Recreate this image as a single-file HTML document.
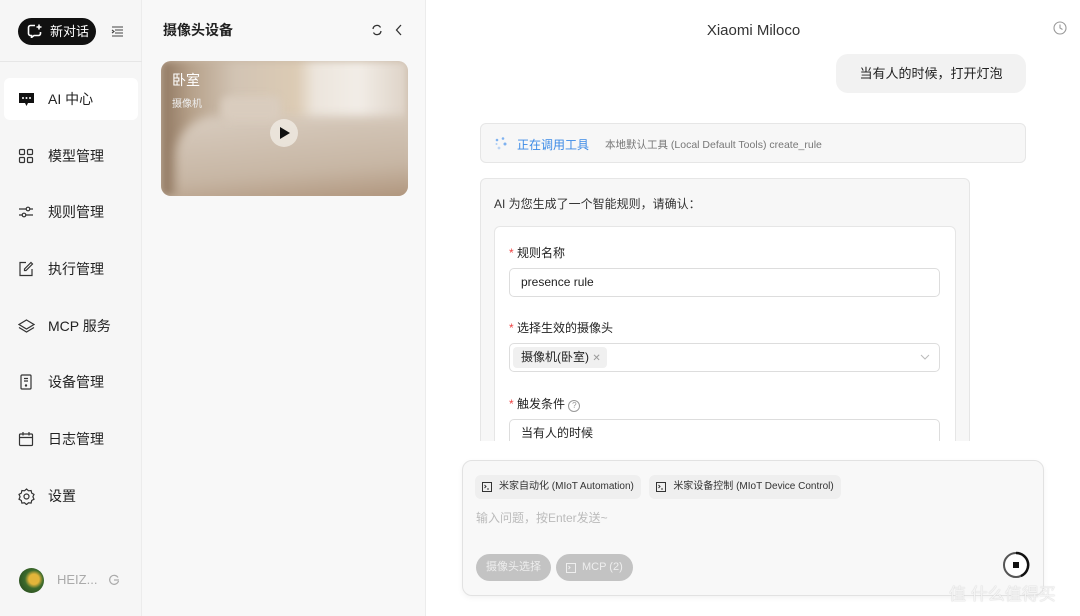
<!DOCTYPE html>
<html><head><meta charset="utf-8"><style>
*{box-sizing:border-box;margin:0;padding:0}
body{width:1080px;height:616px;overflow:hidden;background:#fff;font-family:"Liberation Sans","Noto Sans CJK SC",sans-serif;color:#222;position:relative}
.side{position:absolute;left:0;top:0;width:142px;height:616px;background:#f6f6f6;border-right:1px solid #ececec}
.newbtn{position:absolute;left:18px;top:18px;width:78px;height:27px;background:#111;border-radius:14px;color:#fff;font-size:13px;line-height:27px;padding-left:32px}
.newbtn svg{position:absolute;left:9px;top:6px}
.sep{position:absolute;left:0;top:61px;width:142px;border-top:1px solid #e6e6e6}
.nav{position:absolute;left:4px;width:134px;height:42px;border-radius:6px;font-size:14px;line-height:42px;padding-left:44px;color:#222}
.nav svg{position:absolute;left:14px;top:13px}
.nav.act{background:#fff}
.cam{position:absolute;left:142px;top:0;width:284px;height:616px;background:#f8f8f8;border-right:1px solid #ececec}
.main{position:absolute;left:427px;top:0;width:653px;height:616px;background:#fff}
.chip{display:inline-block;height:24px;line-height:24px;border-radius:6px;background:#efefef;font-size:10px;padding:0 7px 0 24px;position:relative;color:#333}
.chip svg{position:absolute;left:7px;top:7px}
</style></head><body>
<div class="side">
 <div class="newbtn"><svg width="16" height="14" viewBox="0 0 16 14"><path d="M8 1.5H3.5a2 2 0 0 0-2 2v6a2 2 0 0 0 2 2h1v2l2.5-2h4.5a2 2 0 0 0 2-2V8" fill="none" stroke="#fff" stroke-width="1.6"/><path d="M12 0.5v5M9.5 3h5" stroke="#fff" stroke-width="1.6"/></svg>新对话</div>
 <svg style="position:absolute;left:111px;top:26px" width="13" height="11" viewBox="0 0 13 11"><path d="M1 1h11M4 4h8M4 7h8M1 10h11M1 4l2 1.5L1 7" fill="none" stroke="#444" stroke-width="1.1"/></svg>
 <div class="sep"></div>
 <div class="nav act" style="top:78px"><svg width="17" height="17" viewBox="0 0 17 17"><path d="M1 2h15v10H10l-1.5 3L7 12H1z" fill="#111"/><circle cx="5" cy="7" r="1" fill="#fff"/><circle cx="8.5" cy="7" r="1" fill="#fff"/><circle cx="12" cy="7" r="1" fill="#fff"/></svg>AI 中心</div>
 <div class="nav" style="top:135px"><svg width="16" height="16" viewBox="0 0 16 16" fill="none" stroke="#333" stroke-width="1.2"><rect x="1.5" y="1.5" width="5" height="5" rx="1"/><rect x="9.5" y="1.5" width="5" height="5" rx="1"/><rect x="1.5" y="9.5" width="5" height="5" rx="1"/><rect x="9.5" y="9.5" width="5" height="5" rx="1"/></svg>模型管理</div>
 <div class="nav" style="top:191px"><svg width="16" height="16" viewBox="0 0 16 16" fill="none" stroke="#333" stroke-width="1.2"><path d="M1 5h14M1 11h14"/><circle cx="10" cy="5" r="1.8" fill="#f6f6f6"/><circle cx="6" cy="11" r="1.8" fill="#f6f6f6"/></svg>规则管理</div>
 <div class="nav" style="top:248px"><svg width="16" height="16" viewBox="0 0 16 16" fill="none" stroke="#333" stroke-width="1.2"><path d="M8 1.5H2v13h12V8"/><path d="M13 1.5l1.5 1.5L8 9.5H6.5V8z"/></svg>执行管理</div>
 <div class="nav" style="top:305px"><svg width="17" height="16" viewBox="0 0 17 16" fill="none" stroke="#333" stroke-width="1.2"><path d="M8.5 2L16 6.5 8.5 11 1 6.5z"/><path d="M1 9.5l7.5 4.5L16 9.5"/></svg>MCP 服务</div>
 <div class="nav" style="top:361px"><svg width="16" height="16" viewBox="0 0 16 16" fill="none" stroke="#333" stroke-width="1.2"><rect x="3" y="1" width="10" height="14" rx="1"/><path d="M6 4.5h4M6 7h4"/><circle cx="8" cy="11.5" r=".6" fill="#333"/></svg>设备管理</div>
 <div class="nav" style="top:418px"><svg width="16" height="16" viewBox="0 0 16 16" fill="none" stroke="#333" stroke-width="1.2"><rect x="1.5" y="3" width="13" height="11.5" rx="1"/><path d="M1.5 6.5h13M5 1v3.5M11 1v3.5"/></svg>日志管理</div>
 <div class="nav" style="top:475px"><svg width="17" height="17" viewBox="0 0 17 17" fill="none" stroke="#333" stroke-width="1.2"><path d="M8.5 1l2 1.8 2.6-.3.6 2.6 2.3 1.3-1.1 2.4 1.1 2.4-2.3 1.3-.6 2.6-2.6-.3-2 1.8-2-1.8-2.6.3-.6-2.6L1 11.2l1.1-2.4L1 6.4l2.3-1.3.6-2.6 2.6.3z"/><circle cx="8.5" cy="8.5" r="2.5"/></svg>设置</div>
 <div style="position:absolute;left:19px;top:568px;width:25px;height:25px;border-radius:50%;background:radial-gradient(circle at 60% 45%,#e3b53a 0 25%,#3d6b2c 45%,#1f3d18 100%)"></div>
 <div style="position:absolute;left:57px;top:572px;font-size:13px;color:#aaa">HEIZ...</div>
 <svg style="position:absolute;left:108px;top:574px" width="12" height="12" viewBox="0 0 12 12" fill="none" stroke="#aaa" stroke-width="1.2"><path d="M10 3.5A4.5 4.5 0 1 0 10.5 7"/><path d="M6 6h5"/></svg>
</div>
<div class="cam">
 <div style="position:absolute;left:21px;top:20px;font-size:14px;font-weight:bold;color:#222">摄像头设备</div>
 <svg style="position:absolute;left:229px;top:24px" width="12" height="12" viewBox="0 0 12 12" fill="none" stroke="#333" stroke-width="1.3"><path d="M2 5a4 4 0 0 1 7.5-1.5M10 7a4 4 0 0 1-7.5 1.5"/></svg>
 <svg style="position:absolute;left:253px;top:24px" width="8" height="12" viewBox="0 0 8 12" fill="none" stroke="#333" stroke-width="1.3"><path d="M6 1L1.5 6 6 11"/></svg>
 <div style="position:absolute;left:19px;top:61px;width:247px;height:135px;border-radius:10px;overflow:hidden;background:#c9b8a5">
  <div style="position:absolute;left:0;top:0;width:247px;height:135px;background:linear-gradient(90deg,#8f7660 0%,#b6a18a 12%,#d2c4b4 30%,#dccbb4 55%,#ece5dc 62%,#f2ede7 80%,#ddd2c6 100%);filter:blur(4px)"></div>
  <div style="position:absolute;left:15px;top:55px;width:240px;height:90px;background:linear-gradient(175deg,#d8ccbf,#c7b6a4 60%,#a98c72);border-radius:40px 0 0 0;filter:blur(5px)"></div>
  <div style="position:absolute;left:60px;top:35px;width:60px;height:25px;background:#d9ccbe;border-radius:8px;filter:blur(4px)"></div>
  <div style="position:absolute;left:11px;top:9px;color:#fff;font-size:14px">卧室</div>
  <div style="position:absolute;left:11px;top:34px;color:#eee;font-size:10px">摄像机</div>
  <div style="position:absolute;left:109px;top:58px;width:28px;height:28px;border-radius:50%;background:rgba(240,235,228,.8)"><svg style="position:absolute;left:10px;top:8px" width="10" height="12" viewBox="0 0 10 12"><path d="M0 0L10 6 0 12z" fill="#111"/></svg></div>
 </div>
</div>
<div class="main">
 <div style="position:absolute;left:0;width:653px;top:22px;text-align:center;font-size:15px;color:#333">Xiaomi Miloco</div>
 <svg style="position:absolute;left:626px;top:21px" width="14" height="14" viewBox="0 0 14 14" fill="none" stroke="#999" stroke-width="1.1"><circle cx="7" cy="7" r="6"/><path d="M7 3.5V7l2.5 1.5"/></svg>
 <div style="position:absolute;left:409px;top:54px;width:190px;height:39px;border-radius:12px;background:#f2f2f2;font-size:13px;line-height:39px;text-align:center;color:#222">当有人的时候，打开灯泡</div>
 <div style="position:absolute;left:53px;top:123px;width:546px;height:40px;border:1px solid #e6e6e6;border-radius:6px;background:#f7f7f7">
  <svg style="position:absolute;left:14px;top:13px" width="14" height="14" viewBox="0 0 14 14" fill="#7fb2f0"><circle cx="2" cy="3" r="1.3"/><circle cx="8" cy="1.5" r="1.3"/><circle cx="10" cy="7" r="1.5"/><circle cx="4" cy="11" r="1.4" opacity=".5"/><circle cx="1.5" cy="7" r="1" opacity=".6"/></svg>
  <span style="position:absolute;left:36px;top:12px;font-size:12px;color:#3b8ae6">正在调用工具</span>
  <span style="position:absolute;left:124px;top:13px;font-size:10.5px;color:#777">本地默认工具 (Local Default Tools) create_rule</span>
 </div>
 <div style="position:absolute;left:53px;top:178px;width:490px;height:280px;border:1px solid #e6e6e6;border-radius:6px;background:#f7f7f7">
  <div style="position:absolute;left:13px;top:16px;font-size:12px;color:#333">AI 为您生成了一个智能规则，请确认：</div>
  <div style="position:absolute;left:13px;top:47px;width:462px;height:240px;border:1px solid #e6e6e6;border-radius:6px;background:#fff">
   <div style="position:absolute;left:14px;top:17px;font-size:12px"><span style="color:#e44">* </span>规则名称</div>
   <div style="position:absolute;left:14px;top:41px;width:431px;height:29px;border:1px solid #ddd;border-radius:5px;font-size:12px;line-height:27px;padding-left:11px">presence rule</div>
   <div style="position:absolute;left:14px;top:92px;font-size:12px"><span style="color:#e44">* </span>选择生效的摄像头</div>
   <div style="position:absolute;left:14px;top:116px;width:431px;height:29px;border:1px solid #ddd;border-radius:5px">
    <span style="position:absolute;left:3px;top:3px;height:21px;line-height:21px;background:#f0f0f0;border-radius:4px;font-size:12px;padding:0 6px 0 8px">摄像机(卧室) <span style="color:#999;font-size:10px">✕</span></span>
    <svg style="position:absolute;right:9px;top:10px" width="10" height="7" viewBox="0 0 10 7" fill="none" stroke="#bbb"><path d="M1 1l4 4 4-4"/></svg>
   </div>
   <div style="position:absolute;left:14px;top:168px;font-size:12px"><span style="color:#e44">* </span>触发条件 <span style="display:inline-block;width:12px;height:12px;border:1px solid #999;border-radius:50%;font-size:8px;line-height:10px;text-align:center;color:#999">?</span></div>
   <div style="position:absolute;left:14px;top:192px;width:431px;height:29px;border:1px solid #ddd;border-radius:5px;font-size:12px;line-height:27px;padding-left:11px">当有人的时候</div>
  </div>
 </div>
 <div style="position:absolute;left:0;top:441px;width:653px;height:175px;background:#fff"></div>
 <div style="position:absolute;left:35px;top:460px;width:582px;height:136px;border:1px solid #e2e2e2;border-radius:10px;background:#f8f8f8;box-shadow:0 2px 6px rgba(0,0,0,.05)">
  <div style="position:absolute;left:12px;top:14px">
   <span class="chip"><svg width="10" height="10" viewBox="0 0 10 10" fill="none" stroke="#333"><rect x=".5" y=".5" width="9" height="9"/><path d="M2.5 3l1.5 1.5-1.5 1.5M5 7h2"/></svg>米家自动化 (MIoT Automation)</span>
   <span class="chip" style="margin-left:4px"><svg width="10" height="10" viewBox="0 0 10 10" fill="none" stroke="#333"><rect x=".5" y=".5" width="9" height="9"/><path d="M2.5 3l1.5 1.5-1.5 1.5M5 7h2"/></svg>米家设备控制 (MIoT Device Control)</span>
  </div>
  <div style="position:absolute;left:13px;top:48px;font-size:12px;color:#bbb">输入问题，按Enter发送~</div>
  <span style="position:absolute;left:13px;top:93px;height:27px;line-height:27px;padding:0 10px;border-radius:14px;background:#c3c3c3;color:#eee;font-size:11px">摄像头选择</span>
  <span style="position:absolute;left:93px;top:93px;height:27px;line-height:27px;padding:0 10px 0 26px;border-radius:14px;background:#c3c3c3;color:#eee;font-size:11px">MCP (2)<svg style="position:absolute;left:10px;top:9px" width="10" height="10" viewBox="0 0 10 10" fill="none" stroke="#eee"><rect x=".5" y=".5" width="9" height="9"/><path d="M2.5 3l1.5 1.5-1.5 1.5"/></svg></span>
  <svg style="position:absolute;left:539px;top:90px" width="28" height="28" viewBox="0 0 28 28"><circle cx="14" cy="14" r="12" fill="#fff" stroke="#555" stroke-width="2"/><path d="M14 2a12 12 0 0 1 5 23" fill="none" stroke="#111" stroke-width="2.5"/><rect x="11" y="11" width="6" height="6" fill="#111"/></svg>
 </div>
 <div style="position:absolute;left:522px;top:580px;font-size:17px;color:#f4f4f4;text-shadow:0 0 1px #bbb">值 什么值得买</div>
</div>
</body></html>
